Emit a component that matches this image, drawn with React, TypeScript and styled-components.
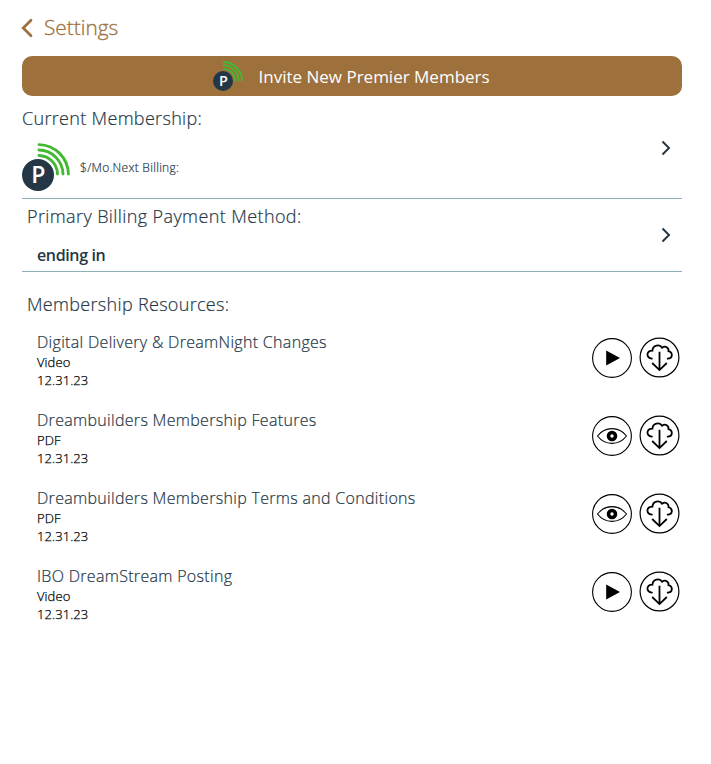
import React from "react";
import styled, { createGlobalStyle } from "styled-components";

const Global = createGlobalStyle`
  *, *::before, *::after { box-sizing: border-box; }
  body { margin: 0; background: #fff; font-family: "Open Sans", "Noto Sans", sans-serif; }
`;

const Page = styled.main`
  width: 660px;
  margin-left: 22px;
  padding-top: 12px;
  color: #243746;
`;

const Header = styled.header`
  display: flex;
  align-items: center;
  height: 32px;
  color: #9e703c;
`;

const BackIcon = styled.svg`
  width: 12px;
  height: 20px;
  margin: 0 11px 0 -1px;
`;

const Title = styled.h1`
  margin: -2px 0 0;
  font-size: 20.8px;
  font-weight: 300;
  -webkit-text-stroke: 0.3px currentColor;
  line-height: 32px;
`;

const InviteButton = styled.button`
  display: flex;
  align-items: center;
  width: 100%;
  height: 40px;
  margin-top: 12px;
  padding: 0 0 0 191px;
  border: 0;
  border-radius: 10px;
  background: #9e703c;
  color: #fff;
  font: 400 17px/24px "Open Sans", "Noto Sans", sans-serif;
`;

const InviteLabel = styled.span`
  margin-left: 15.5px;
  padding-top: 2px;
  white-space: nowrap;
`;

const Logo = styled.svg<{ $size: number }>`
  display: block;
  flex: none;
  width: ${(p) => p.$size}px;
  height: ${(p) => p.$size}px;
`;

const Panel = styled.section<{ $height: number }>`
  display: flex;
  justify-content: space-between;
  align-items: center;
  height: ${(p) => p.$height}px;
  border-bottom: 1px solid #8fb0b8;
`;

const PanelBody = styled.div<{ $indent?: number }>`
  align-self: flex-start;
  padding-left: ${(p) => p.$indent ?? 0}px;
`;

const Heading = styled.h2<{ $top: number; $tracking?: number }>`
  margin: 0;
  padding-top: ${(p) => p.$top}px;
  font-size: 18px;
  font-weight: 300;
  -webkit-text-stroke: 0.2px currentColor;
  letter-spacing: ${(p) => p.$tracking ?? 0.32}px;
  line-height: 24px;
  white-space: nowrap;
`;

const Plan = styled.div`
  display: flex;
  align-items: center;
  gap: 10px;
  margin-top: 13px;
  font-size: 12px;
  font-weight: 300;
  -webkit-text-stroke: 0.2px currentColor;
  letter-spacing: 0.28px;
`;

const Card = styled.p`
  margin: 15px 0 0 10px;
  font-size: 16px;
  font-weight: 600;
  letter-spacing: -0.36px;
  line-height: 24px;
`;

const Chevron = styled.svg<{ $drop: number }>`
  width: 10px;
  height: 16px;
  margin: ${(p) => p.$drop}px 11px 0 0;
`;

const Resources = styled.section`
  padding-left: 5px;
`;

const List = styled.ul`
  margin: 15px 0 0;
  padding: 0 2px 0 10px;
  list-style: none;
`;

const Item = styled.li`
  display: flex;
  justify-content: space-between;
  height: 78px;
`;

const ItemTitle = styled.h3`
  margin: 0;
  font-size: 16px;
  font-weight: 300;
  -webkit-text-stroke: 0.2px currentColor;
  letter-spacing: 0.31px;
  line-height: 22px;
`;

const Meta = styled.p`
  margin: 0;
  color: #000;
  font-size: 13px;
  font-weight: 300;
  -webkit-text-stroke: 0.25px currentColor;
  letter-spacing: 0.08px;
  line-height: 18px;
`;

const Actions = styled.div`
  display: flex;
  gap: 7px;
  padding-top: 6px;
`;

const IconButton = styled.button`
  width: 41px;
  height: 41px;
  padding: 0;
  border: 0;
  background: none;
`;

const Glyph = styled.svg`
  display: block;
  width: 41px;
  height: 41px;
`;

const LogoLetter = styled.text`
  font: 600 23px "Open Sans", sans-serif;
`;

function PremierLogo({ size }: { size: number }) {
  return (
    <Logo $size={size} viewBox="0 0 48 48">
      <g fill="none" stroke="#43b933" strokeWidth="2.9" strokeLinecap="round">
        <path d="M17 1.6A30 30 0 0 1 46.4 31" />
        <path d="M17 7A24.5 24.5 0 0 1 41 31" />
        <path d="M17 12.5A19 19 0 0 1 35.5 31" />
      </g>
      <circle cx="16" cy="32" r="16" fill="#243746" />
      <LogoLetter x="16.5" y="40" textAnchor="middle" fill="#fff">P</LogoLetter>
    </Logo>
  );
}

function ForwardIcon({ drop }: { drop: number }) {
  return (
    <Chevron $drop={drop} viewBox="0 0 10 16" fill="none" stroke="#243746" strokeWidth="2">
      <path d="M1.5 1.5 8 8l-6.5 6.5" />
    </Chevron>
  );
}

type Kind = "Video" | "PDF";

function OpenIcon({ kind }: { kind: Kind }) {
  return (
    <Glyph viewBox="0 0 41 41" fill="none" stroke="#000">
      <circle cx="21" cy="21" r="19.4" strokeWidth="1.1" />
      {kind === "Video" ? (
        <path d="M15.2 13.4v15.2l13.8-7.6z" fill="#000" stroke="none" />
      ) : (
        <>
          <path d="M6.5 21C14 11.2 28 11.2 35.5 21 28 30.8 14 30.8 6.5 21z" strokeWidth="1.1" />
          <circle cx="21" cy="21" r="3.5" strokeWidth="3.6" />
        </>
      )}
    </Glyph>
  );
}

function DownloadIcon() {
  return (
    <Glyph viewBox="0 0 41 41" fill="none" stroke="#000" strokeWidth="1.8">
      <circle cx="20.5" cy="20.5" r="19.4" strokeWidth="1.2" />
      <path d="M12.9 21.6C6.8 20.8 7 13.4 13.4 13.7 13.7 8.2 20.7 6.7 23.1 10.7 26.4 8.3 30 10.6 29.5 14.2 34.3 15.7 33.8 21.4 28.7 21.6" strokeLinecap="round" />
      <path d="M20.5 14.8v18M13.2 26l7.3 7.1 7.3-7.1" />
    </Glyph>
  );
}

const resources: { title: string; kind: Kind; date: string }[] = [
  { title: "Digital Delivery & DreamNight Changes", kind: "Video", date: "12.31.23" },
  { title: "Dreambuilders Membership Features", kind: "PDF", date: "12.31.23" },
  { title: "Dreambuilders Membership Terms and Conditions", kind: "PDF", date: "12.31.23" },
  { title: "IBO DreamStream Posting", kind: "Video", date: "12.31.23" },
];

export default function App() {
  return (
    <Page>
      <Global />
      <Header>
        <BackIcon viewBox="0 0 12 20" fill="none" stroke="currentColor" strokeWidth="2.7">
          <path d="M10 2.2 2.2 10l7.8 7.8" strokeLinecap="round" />
        </BackIcon>
        <Title>Settings</Title>
      </Header>
      <InviteButton>
        <PremierLogo size={30} />
        <InviteLabel>Invite New Premier Members</InviteLabel>
      </InviteButton>
      <Panel $height={103}>
        <PanelBody>
          <Heading $top={10}>Current Membership:</Heading>
          <Plan>
            <PremierLogo size={48} />
            <span>$/Mo.Next Billing:</span>
          </Plan>
        </PanelBody>
        <ForwardIcon drop={2} />
      </Panel>
      <Panel $height={73}>
        <PanelBody $indent={5}>
          <Heading $top={5} $tracking={0.4}>Primary Billing Payment Method:</Heading>
          <Card>ending in</Card>
        </PanelBody>
        <ForwardIcon drop={0} />
      </Panel>
      <Resources>
        <Heading $top={20}>Membership Resources:</Heading>
        <List>
          {resources.map((r) => (
            <Item key={r.title}>
              <div>
                <ItemTitle>{r.title}</ItemTitle>
                <Meta>{r.kind}</Meta>
                <Meta>{r.date}</Meta>
              </div>
              <Actions>
                <IconButton aria-label="Open">
                  <OpenIcon kind={r.kind} />
                </IconButton>
                <IconButton aria-label="Download">
                  <DownloadIcon />
                </IconButton>
              </Actions>
            </Item>
          ))}
        </List>
      </Resources>
    </Page>
  );
}
